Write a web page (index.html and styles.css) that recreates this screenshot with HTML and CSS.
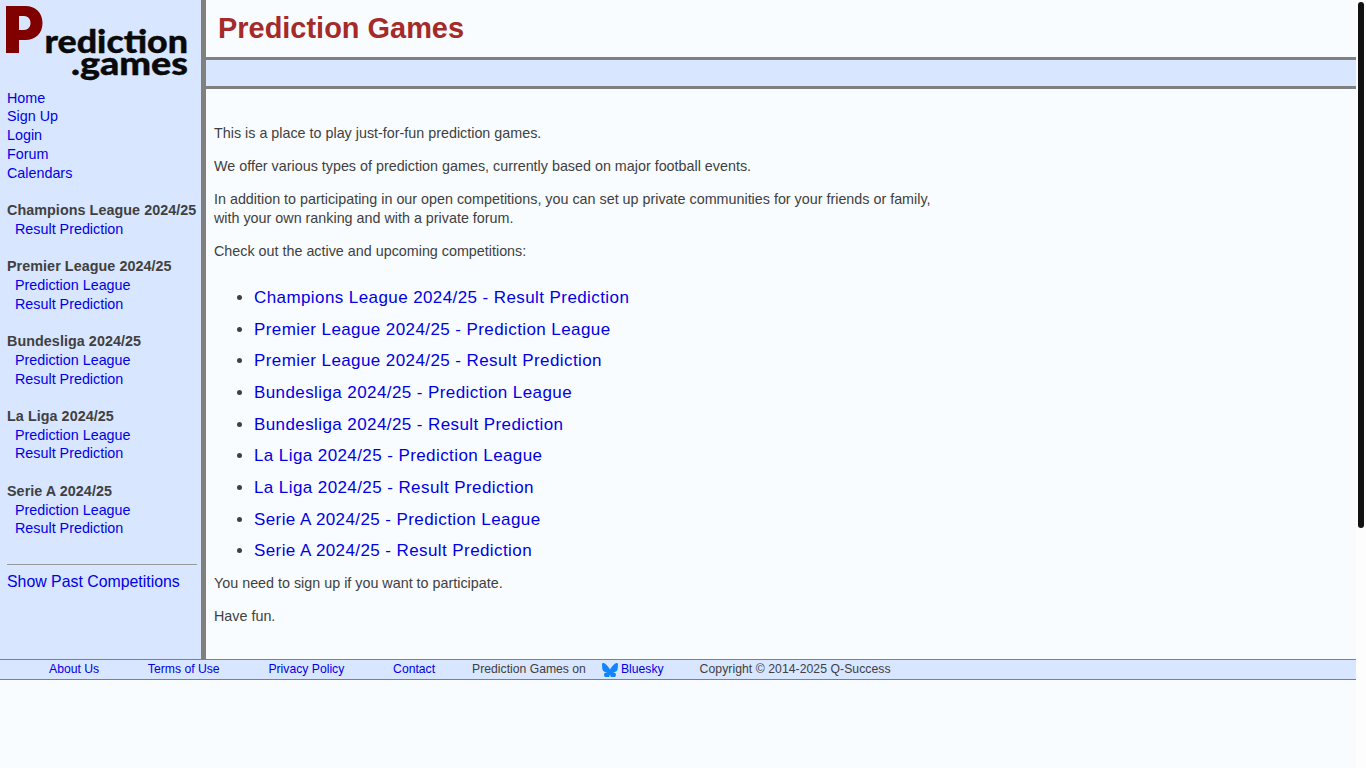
FILE: index.html
```html
<!DOCTYPE html>
<html lang="en">
<head>
<meta charset="utf-8">
<title>Prediction Games</title>
<link rel="stylesheet" href="styles.css">
</head>
<body>
<div class="page">
  <div class="top">
    <aside class="side">
      <a class="logo" href="#" aria-label="Prediction Games">
        <svg width="190" height="84" viewBox="0 0 190 84">
          <path class="logo-p" fill-rule="evenodd" d="M6 6H25C36 6 42.500 13 42.500 23C42.500 33 36 40 25 40H19V53H6ZM19 16V30H24C28 30 30.500 27 30.500 23C30.500 19 28 16 24 16Z"/>
          <text class="logo-t" x="44.500" y="52.500" textLength="143.500" lengthAdjust="spacingAndGlyphs">rediction</text>
          <text class="logo-t" x="71" y="75" textLength="117" lengthAdjust="spacingAndGlyphs">.games</text>
        </svg>
      </a>
      <nav class="nav">
        <a href="#">Home</a>
        <a href="#">Sign Up</a>
        <a href="#">Login</a>
        <a href="#">Forum</a>
        <a href="#">Calendars</a>
        <div class="gap"></div>
        <b>Champions League 2024/25</b>
        <a class="sub" href="#">Result Prediction</a>
        <div class="gap"></div>
        <b>Premier League 2024/25</b>
        <a class="sub" href="#">Prediction League</a>
        <a class="sub" href="#">Result Prediction</a>
        <div class="gap"></div>
        <b>Bundesliga 2024/25</b>
        <a class="sub" href="#">Prediction League</a>
        <a class="sub" href="#">Result Prediction</a>
        <div class="gap"></div>
        <b>La Liga 2024/25</b>
        <a class="sub" href="#">Prediction League</a>
        <a class="sub" href="#">Result Prediction</a>
        <div class="gap"></div>
        <b>Serie A 2024/25</b>
        <a class="sub" href="#">Prediction League</a>
        <a class="sub" href="#">Result Prediction</a>
      </nav>
      <hr class="rule">
      <a class="past" href="#">Show Past Competitions</a>
    </aside>
    <main class="main">
      <h1 class="title">Prediction Games</h1>
      <div class="band"></div>
      <div class="content">
        <p>This is a place to play just-for-fun prediction games.</p>
        <p>We offer various types of prediction games, currently based on major football events.</p>
        <p>In addition to participating in our open competitions, you can set up private communities for your friends or family, with your own ranking and with a private forum.</p>
        <p>Check out the active and upcoming competitions:</p>
        <ul class="list">
          <li><a href="#">Champions League 2024/25 - Result Prediction</a></li>
          <li><a href="#">Premier League 2024/25 - Prediction League</a></li>
          <li><a href="#">Premier League 2024/25 - Result Prediction</a></li>
          <li><a href="#">Bundesliga 2024/25 - Prediction League</a></li>
          <li><a href="#">Bundesliga 2024/25 - Result Prediction</a></li>
          <li><a href="#">La Liga 2024/25 - Prediction League</a></li>
          <li><a href="#">La Liga 2024/25 - Result Prediction</a></li>
          <li><a href="#">Serie A 2024/25 - Prediction League</a></li>
          <li><a href="#">Serie A 2024/25 - Result Prediction</a></li>
        </ul>
        <p>You need to sign up if you want to participate.</p>
        <p>Have fun.</p>
      </div>
    </main>
  </div>
  <footer class="foot">
    <a class="f1" href="#">About Us</a>
    <a class="f2" href="#">Terms of Use</a>
    <a class="f3" href="#">Privacy Policy</a>
    <a class="f4" href="#">Contact</a>
    <span class="f5">Prediction Games on</span>
    <svg class="fly" width="16" height="14" viewBox="0 0 16 14"><path d="M3.500 1C5.300 2.300 7.200 4.900 8 6.500C8.800 4.900 10.700 2.300 12.500 1C13.800 0 16 -.8 16 1.700C16 2.200 15.700 5.900 15.500 6.600C14.900 8.900 12.500 9.500 10.400 9.100C14.100 9.700 15 11.800 13 13.900C9.200 17.800 8.500 12.900 8 11.500C7.500 12.900 6.800 17.800 3 13.900C1 11.800 1.900 9.700 5.600 9.100C3.500 9.500 1.100 8.900 .5 6.600C.3 5.900 0 2.200 0 1.700C0 -.8 2.200 0 3.500 1Z"/></svg>
    <a class="f6" href="#">Bluesky</a>
    <span class="f7">Copyright © 2014-2025 Q-Success</span>
  </footer>
  <div class="bar"></div>
</div>
</body>
</html>
```
FILE: styles.css
```css
html, body { margin: 0; height: 100%; overflow: hidden; }
html { background: #fdfdfe; }
body { color: #404040; font-family: "Liberation Sans", Arial, sans-serif; font-size: 14.33px; }
a { color: #0000e6; text-decoration: none; }
.page { position: relative; width: 1356px; height: 768px; background: #f8fcff; }
.top { display: flex; height: 659px; }
.side { box-sizing: border-box; width: 206px; flex: none; background: #d8e6ff; border-right: 5px solid #808080; padding: 0 4px 0 7px; }
.logo { display: block; height: 88.75px; margin-left: -7px; }
.logo svg { display: block; }
.logo-p { fill: #800000; }
.logo-t { font-family: "Lato", sans-serif; font-weight: 900; font-size: 33px; fill: #0a0a0a; stroke: #0a0a0a; stroke-width: .4px; }
.nav { display: flex; flex-direction: column; line-height: 18.72px; white-space: nowrap; }
.nav b { color: #404040; letter-spacing: .06px; }
.gap { height: 18.72px; }
.sub { padding-left: 8px; }
.rule { border: 0; border-top: 1px solid #999; margin: 26px 0 0; height: 1px; background: none; }
.past { display: block; margin-top: 6px; font-size: 15.87px; line-height: 20px; white-space: nowrap; }
.main { flex: 1; min-width: 0; }
.title { margin: 0; height: 57px; box-sizing: border-box; padding: 11px 0 0 12px; font-size: 28.95px; line-height: 34px; color: #a52a2a; font-weight: bold; }
.band { height: 26px; background: #d8e6ff; border-top: 3px solid #808080; border-bottom: 3px solid #808080; }
.content { padding: 35px 0 0 8px; width: 720px; line-height: 19px; }
.content p { margin: 0 0 14px; }
.list { margin: 27.2px 0 0; padding: 0 0 0 40px; font-size: 17px; letter-spacing: .41px; }
.list li { line-height: 19px; margin-bottom: 12.63px; }
.list + p { margin-top: 13.63px; }
.foot { box-sizing: border-box; display: flex; align-items: center; height: 21px; background: #d8e6ff; border-top: 1px solid #808080; border-bottom: 1px solid #808080; font-size: 12.2px; line-height: 19px; white-space: nowrap; }
.f1 { margin-left: 49px; }
.f2 { margin-left: 48.7px; }
.f3 { margin-left: 48.8px; }
.f4 { margin-left: 48.8px; }
.f5 { margin-left: 37px; }
.fly { fill: #1185fe; margin-left: 16px; margin-top: 1px; flex: none; }
.f6 { margin-left: 3px; }
.f7 { margin-left: 36px; letter-spacing: .06px; }
.bar { position: absolute; left: 1358px; top: 2px; width: 6px; height: 526px; border-radius: 3px; background: #111; }
```
